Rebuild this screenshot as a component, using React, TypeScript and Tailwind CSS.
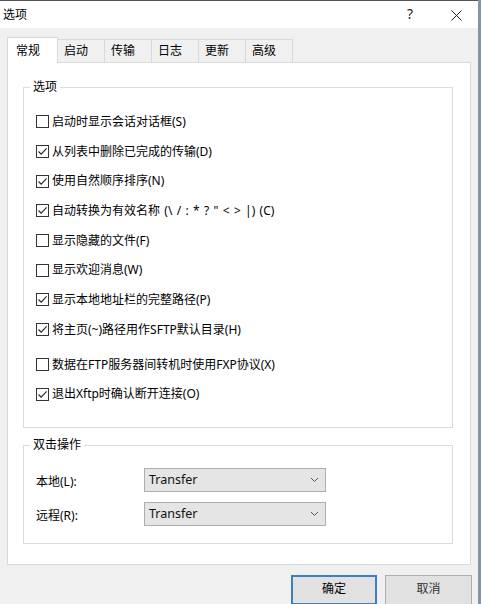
import React from "react";

const items: { label: string; checked: boolean; gap?: boolean; wide?: boolean }[] = [
  { label: "启动时显示会话对话框(S)", checked: false },
  { label: "从列表中删除已完成的传输(D)", checked: true },
  { label: "使用自然顺序排序(N)", checked: true },
  { label: '自动转换为有效名称 (\\ / : * ? " < > |) (C)', checked: true, wide: true },
  { label: "显示隐藏的文件(F)", checked: false },
  { label: "显示欢迎消息(W)", checked: false },
  { label: "显示本地地址栏的完整路径(P)", checked: true },
  { label: "将主页(~)路径用作SFTP默认目录(H)", checked: true },
  { label: "数据在FTP服务器间转机时使用FXP协议(X)", checked: false, gap: true },
  { label: "退出Xftp时确认断开连接(O)", checked: true },
];

const tabs = ["启动", "传输", "日志", "更新", "高级"];

function CheckBox({ checked }: { checked: boolean }) {
  return (
    <div className="w-[13px] h-[13px] border border-[#333333] bg-white flex items-center justify-center shrink-0">
      {checked && (
        <svg width="11" height="11" viewBox="0 0 11 11">
          <path d="M1.5 5.5 L4.2 8.2 L9.6 2.4" fill="none" stroke="#222" strokeWidth="1.1" />
        </svg>
      )}
    </div>
  );
}

function Select() {
  return (
    <div className="w-[182px] h-[24px] border border-[#adadad] bg-[#e5e5e5] flex items-center justify-between pl-[4px] pr-[6px]">
      <span className="text-[12.5px] leading-none text-[#111]">Transfer</span>
      <svg width="9" height="6" viewBox="0 0 9 6">
        <path d="M1 1 L4.5 4.5 L8 1" fill="none" stroke="#555" strokeWidth="1" />
      </svg>
    </div>
  );
}

export default function App() {
  return (
    <div className="w-[481px] h-[604px] overflow-hidden flex font-['Noto_Sans','Noto_Sans_CJK_SC',sans-serif] text-[12px] text-black">
      <div className="w-[478px] h-full flex flex-col bg-[#f0f0f0]">
        {/* Title bar */}
        <div className="h-[28px] shrink-0 bg-white border-t border-[#4d5660] flex items-center relative">
          <span className="pl-[3px] text-[12px] leading-none">选项</span>
          <span className="absolute left-[407px] top-[6px] text-[14px] leading-none text-[#222]">?</span>
          <svg className="absolute left-[451px] top-[9px]" width="11" height="11" viewBox="0 0 11 11">
            <path d="M0.5 0.5 L10.5 10.5 M10.5 0.5 L0.5 10.5" stroke="#222" strokeWidth="1" />
          </svg>
        </div>

        {/* Tabs */}
        <div className="pt-[9px] pl-[7px]">
          <div className="h-[25px] flex items-end">
            <div className="relative z-10 -mb-px h-[26px] w-[51px] bg-white border-l border-t border-r border-[#d9d9d9] pl-[8px] flex items-center">
              <span className="leading-none">常规</span>
            </div>
            {tabs.map((t) => (
              <div
                key={t}
                className="-ml-px h-[23px] w-[48px] bg-[#f0f0f0] border-l border-t border-r border-[#d9d9d9] pl-[6px] flex items-center first:ml-0"
              >
                <span className="leading-none">{t}</span>
              </div>
            ))}
          </div>

          {/* Panel */}
          <div className="w-[464px] h-[503px] bg-white border border-[#d9d9d9] flex flex-col">
            {/* Group 1 */}
            <div className="relative mt-[24px] ml-[15px] w-[430px] h-[341px] border border-[#dcdcdc] pl-[12px] pt-[19px]">
              <span className="absolute left-[6px] -top-[7px] bg-white px-[3px] leading-none">选项</span>
              {items.map((it) => (
                <div key={it.label} className={`h-[29.7px] flex items-center gap-[3px] ${it.gap ? "mt-[5.3px]" : ""}`}>
                  <CheckBox checked={it.checked} />
                  <span className={`leading-none whitespace-pre ${it.wide ? "[word-spacing:1.2px]" : ""}`}>{it.label}</span>
                </div>
              ))}
            </div>

            {/* Group 2 */}
            <div className="relative mt-[17px] ml-[15px] w-[430px] h-[99px] border border-[#dcdcdc] pl-[12px] pt-[22px] flex flex-col gap-[10px]">
              <span className="absolute left-[6px] -top-[7px] bg-white px-[3px] leading-none">双击操作</span>
              <div className="h-[24px] flex items-center">
                <span className="w-[108px] leading-none pt-[3px]">本地(L):</span>
                <Select />
              </div>
              <div className="h-[24px] flex items-center">
                <span className="w-[108px] leading-none pt-[3px]">远程(R):</span>
                <Select />
              </div>
            </div>
          </div>
        </div>

        {/* Buttons */}
        <div className="mt-[10px] flex justify-end gap-[8px] pr-[6px]">
          <div className="w-[86px] h-[30px] border-2 border-[#3c7fc4] bg-[#e1e1e1] flex items-center justify-center pb-[2px]">
            <span className="leading-none">确定</span>
          </div>
          <div className="w-[87px] h-[30px] border border-[#adadad] bg-[#e1e1e1] flex items-center justify-center pb-[2px]">
            <span className="leading-none text-[#333]">取消</span>
          </div>
        </div>
      </div>
      <div className="w-[3px] h-full bg-[#8794a0]" />
    </div>
  );
}
